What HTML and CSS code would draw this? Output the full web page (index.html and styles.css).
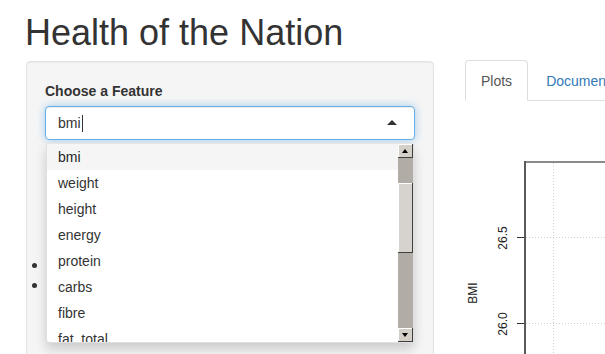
FILE: index.html
```html
<!DOCTYPE html>
<html lang="en">
	<head>
		<meta charset="UTF-8" />
		<meta name="viewport" content="width=device-width, initial-scale=1.0" />
		<title>Health of the Nation</title>
		<link rel="stylesheet" href="styles.css">
	</head>
	<body>
		<div class="page">
			<h1 class="title">Health of the Nation</h1>

			<div class="row">
				<div class="sidebar well">
					<label class="control-label" for="feature">Choose a Feature</label>
					<div class="selectize">
						<div class="selectize-input" id="feature">
							<span class="item">bmi</span><span class="cursor"></span>
						</div>
						<div class="selectize-dropdown">
							<div class="options">
								<div class="option active">bmi</div>
								<div class="option">weight</div>
								<div class="option">height</div>
								<div class="option">energy</div>
								<div class="option">protein</div>
								<div class="option">carbs</div>
								<div class="option">fibre</div>
								<div class="option">fat_total</div>
							</div>
							<div class="scrollbar">
								<div class="sb-btn up"></div>
								<div class="sb-track">
									<div class="sb-thumb"></div>
								</div>
								<div class="sb-btn down"></div>
							</div>
						</div>
					</div>
					<ul class="notes">
						<li></li>
						<li></li>
					</ul>
				</div>

				<div class="main">
					<ul class="nav-tabs">
						<li class="active"><a href="#plots">Plots</a></li>
						<li><a href="#docs">Documentation</a></li>
					</ul>
					<div class="tab-content">
						<svg class="plot" width="140" height="253" viewBox="0 0 140 253">
							<!-- grid -->
							<line class="grid" x1="61" y1="136.5" x2="140" y2="136.5" />
							<line class="grid" x1="61" y1="222.5" x2="140" y2="222.5" />
							<line class="grid" x1="88.5" y1="62" x2="88.5" y2="253" />
							<!-- box -->
							<line class="box-top" x1="59" y1="61" x2="140" y2="61" />
							<line class="box-left" x1="60" y1="60" x2="60" y2="253" />
							<!-- y axis -->
							<line class="tick" x1="52" y1="136.5" x2="59" y2="136.5" />
							<line class="tick" x1="52" y1="222.5" x2="59" y2="222.5" />
							<text class="axis-label" transform="translate(38 137) rotate(-90)">26.5</text>
							<text class="axis-label" transform="translate(38 223) rotate(-90)">26.0</text>
							<text class="axis-title" transform="translate(8 192) rotate(-90)">BMI</text>
						</svg>
					</div>
				</div>
			</div>
		</div>
	</body>
</html>
```

FILE: styles.css
```css
html,
body {
	margin: 0;
	overflow: hidden;
}
body {
	font-family: "Liberation Sans", Arial, sans-serif;
	font-size: 14px;
	line-height: 20px;
	color: #333;
	background-color: #fff;
}
.page {
	padding: 13px 0 0 26px;
}
.title {
	font-size: 36px;
	font-weight: 500;
	line-height: 40px;
	margin: 0 0 7px -1px;
	color: #333;
}
.row {
	display: flex;
	align-items: flex-start;
	gap: 31px;
}
.well {
	width: 408px;
	min-height: 320px;
	box-sizing: border-box;
	margin-top: 1px;
	padding: 19px 18px;
	background-color: #f5f5f5;
	border: 1px solid #e3e3e3;
	border-radius: 4px;
	box-shadow: inset 0 1px 1px rgba(0, 0, 0, 0.05);
}
.control-label {
	display: block;
	font-weight: bold;
	margin-bottom: 5px;
}
.selectize {
	position: relative;
}
.selectize-input {
	position: relative;
	height: 34px;
	box-sizing: border-box;
	padding: 6px 12px;
	background-color: #fff;
	border: 1px solid #66afe9;
	border-radius: 4px;
	box-shadow: inset 0 1px 1px rgba(0, 0, 0, 0.075), 0 0 8px rgba(102, 175, 233, 0.6);
	display: flex;
	align-items: center;
}
.selectize-input .cursor {
	display: inline-block;
	width: 0;
	height: 17px;
	margin-left: 1px;
	border-left: 1px solid #333;
}
.selectize-input::after {
	content: "";
	position: absolute;
	right: 17px;
	top: 50%;
	margin-top: -3px;
	border-style: solid;
	border-width: 0 5px 5px 5px;
	border-color: transparent transparent #333 transparent;
}
.selectize-dropdown {
	position: absolute;
	z-index: 10;
	top: calc(100% + 3px);
	left: 1px;
	width: 368px;
	box-sizing: border-box;
	display: flex;
	background-color: #fff;
	border: 1px solid rgba(0, 0, 0, 0.12);
	border-top-color: #e6e6e6;
	border-radius: 0 0 4px 4px;
	box-shadow: 0 6px 12px rgba(0, 0, 0, 0.175);
}
.options {
	flex: 1;
	height: 198px;
	overflow: hidden;
}
.option {
	padding: 3px 11px;
	color: #333;
}
.option.active {
	background-color: #f5f5f5;
	color: #262626;
}
.scrollbar {
	width: 15px;
	height: 198px;
	display: flex;
	flex-direction: column;
	background-color: #b2aca7;
}
.sb-btn {
	position: relative;
	height: 14px;
	background-color: #d4d0c8;
	box-shadow: inset -1px -1px #404040, inset 1px 1px #fff;
}
.sb-btn::after {
	content: "";
	position: absolute;
	left: 4px;
	top: 5px;
	border-style: solid;
}
.sb-btn.up::after {
	border-width: 0 3.5px 4px 3.5px;
	border-color: transparent transparent #000 transparent;
}
.sb-btn.down::after {
	border-width: 4px 3.5px 0 3.5px;
	border-color: #000 transparent transparent transparent;
}
.sb-track {
	flex: 1;
}
.sb-thumb {
	margin-top: 25px;
	height: 70px;
	background-color: #d6d3cf;
	box-shadow: inset -1px -1px #404040, inset 1px 1px #fff;
}
.notes {
	list-style: none;
	margin: 115px 0 0 -13px;
	padding: 0;
}
.notes li {
	display: flex;
	align-items: center;
	height: 20px;
}
.notes li::before {
	content: "";
	width: 5px;
	height: 5px;
	border-radius: 50%;
	background-color: #333;
}
.main {
	flex: 1;
	min-width: 0;
	overflow: hidden;
}
.nav-tabs {
	display: flex;
	flex-wrap: nowrap;
	white-space: nowrap;
	list-style: none;
	margin: 0;
	padding: 0;
	border-bottom: 1px solid #ddd;
}
.nav-tabs li {
	margin-bottom: -1px;
}
.nav-tabs a {
	display: block;
	padding: 10px 15px 9px;
	margin-right: 2px;
	line-height: 20px;
	border: 1px solid transparent;
	border-radius: 4px 4px 0 0;
	color: #337ab7;
	text-decoration: none;
}
.nav-tabs li.active a {
	color: #555;
	background-color: #fff;
	border-color: #ddd #ddd transparent;
}
.plot {
	display: block;
}
.plot .grid {
	stroke: #cfcfcf;
	stroke-width: 1;
	stroke-dasharray: 1 2;
}
.plot .box-top {
	stroke: #8a8a8a;
	stroke-width: 2;
}
.plot .box-left {
	stroke: #5a5a5a;
	stroke-width: 2;
}
.plot .tick {
	stroke: #333;
	stroke-width: 1;
}
.plot text {
	font-family: "Liberation Sans", Arial, sans-serif;
	font-size: 12px;
	fill: #222;
	text-anchor: middle;
	dominant-baseline: central;
}
```
